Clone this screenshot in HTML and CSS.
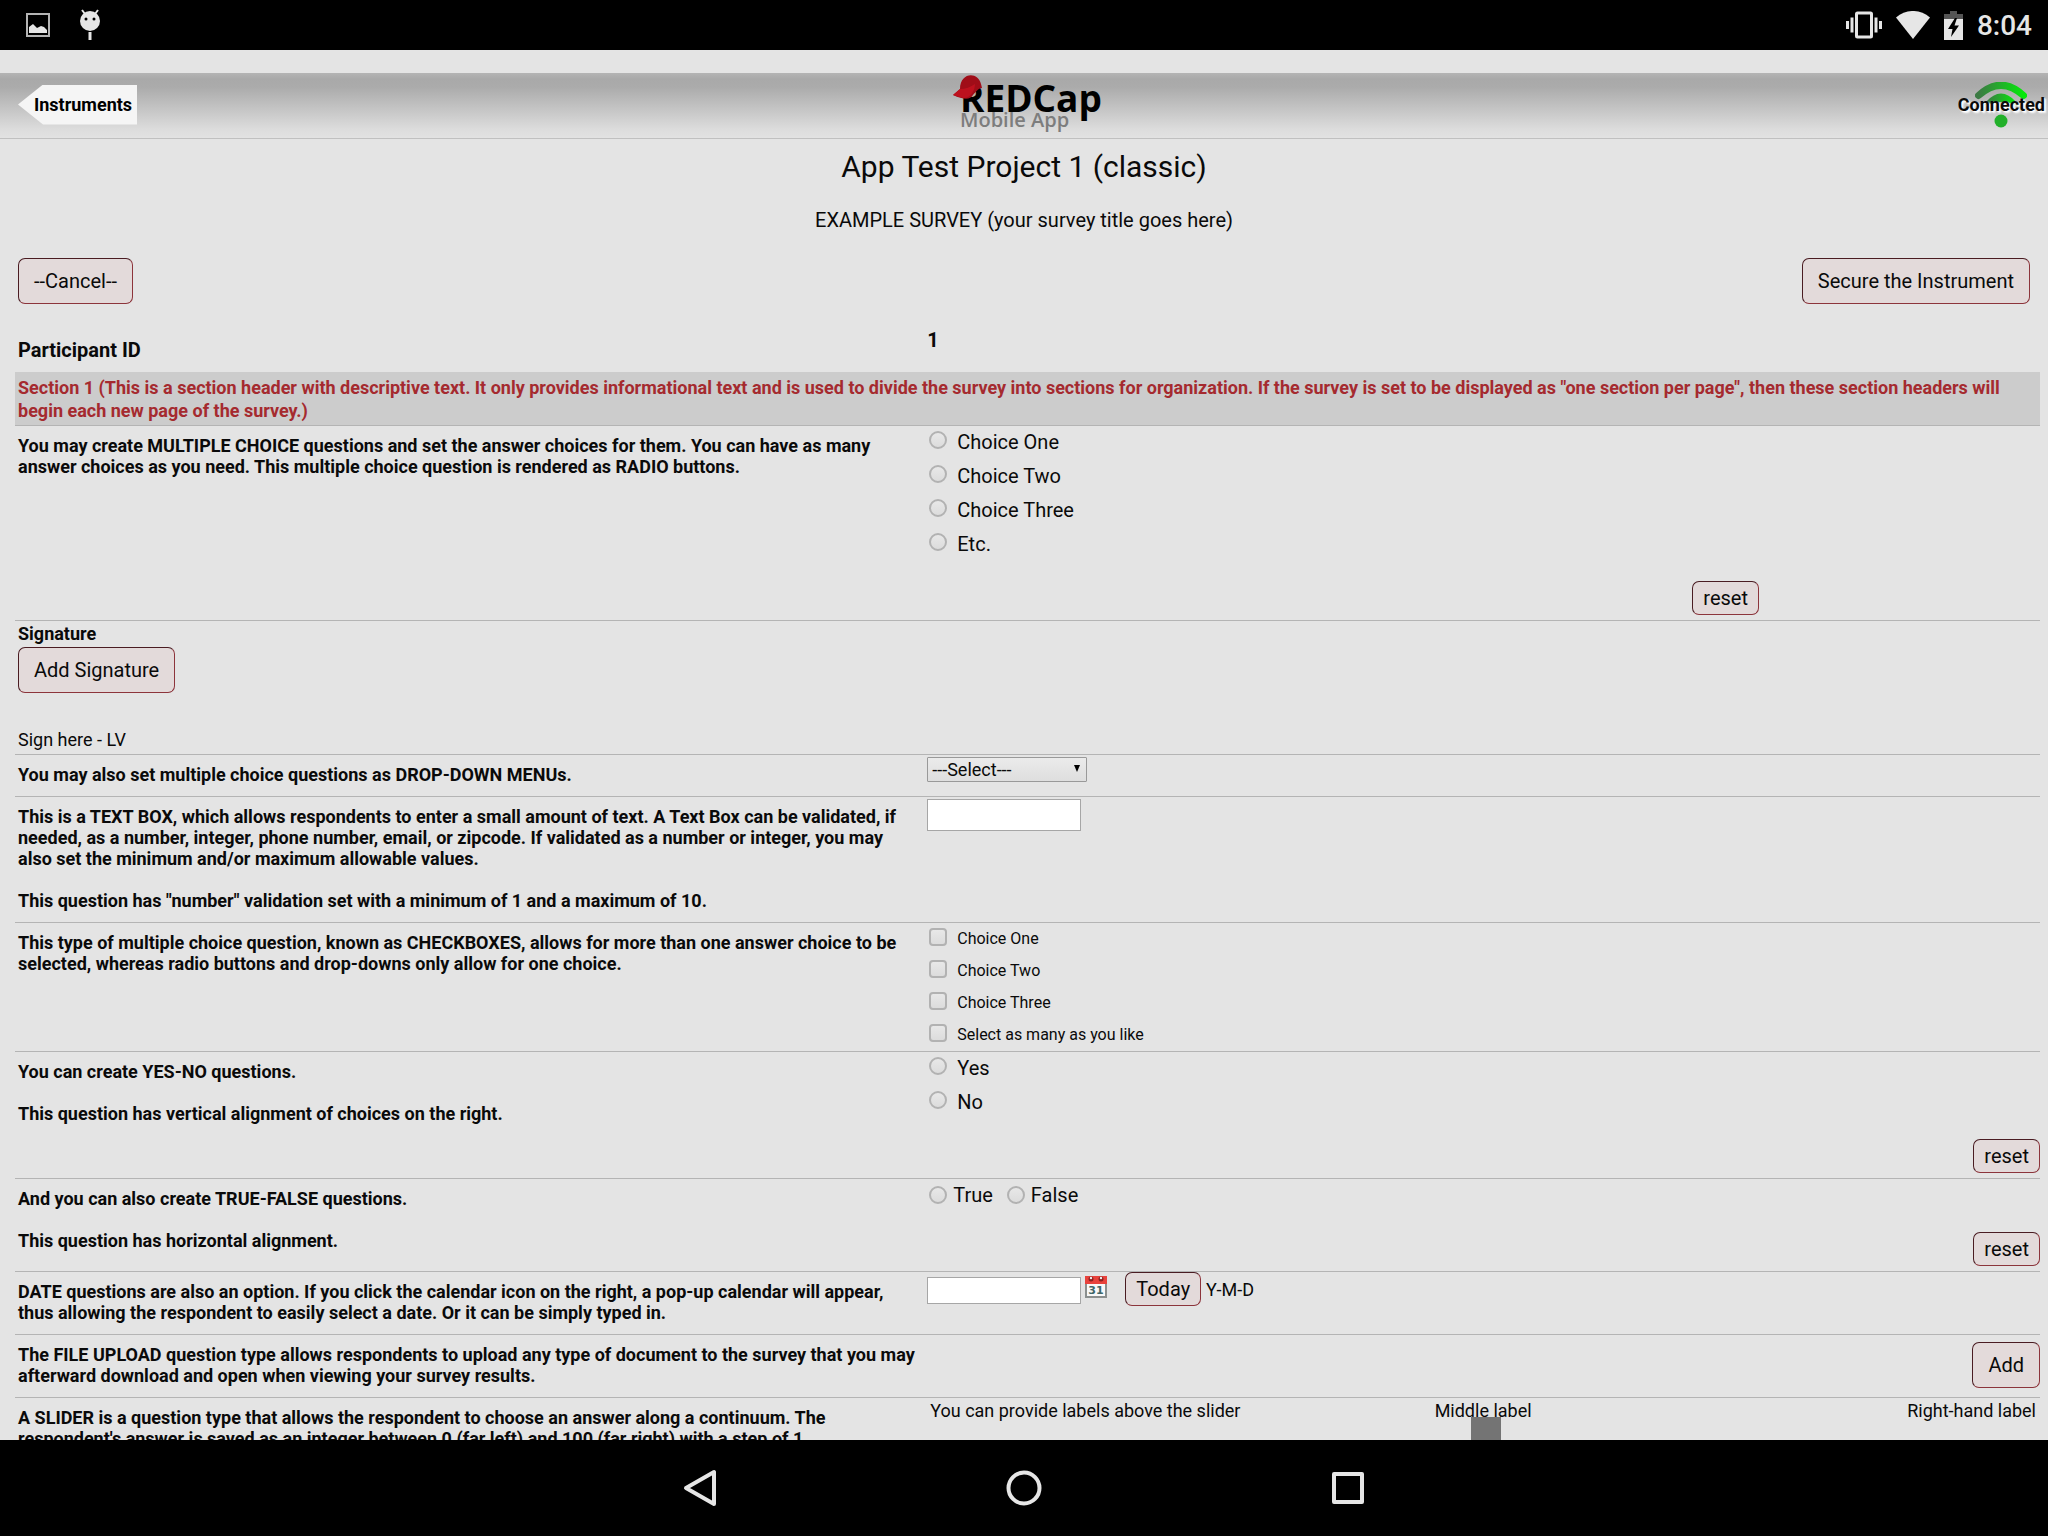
FILE: index.html
```html
<!DOCTYPE html>
<html lang="en">
<head>
<meta charset="utf-8">
<meta name="viewport" content="width=device-width, initial-scale=1">
<title>REDCap Mobile App</title>
<link rel="stylesheet" href="styles.css">
</head>
<body>
<div class="status-bar">
  <div class="status-group status-group-left">
    <svg width="24" height="24" viewBox="0 0 24 24" aria-hidden="true"><rect x="1" y="1" width="22" height="22" fill="none" stroke="#b4b4b4" stroke-width="2"/><path d="M3 20V14L7 11L11 15L15 13L18 14L21 17V20Z" fill="#e6e6e6"/></svg>
    <svg width="20" height="32" viewBox="0 0 20 32" aria-hidden="true"><path d="M2 1L5 5M18 1L15 5" stroke="#e6e6e6" stroke-width="2"/><circle cx="10" cy="12" r="10" fill="#e6e6e6"/><circle cx="6" cy="10" r="1.5"/><circle cx="14" cy="10" r="1.5"/><rect x="8.500" y="23" width="3" height="8" fill="#e6e6e6"/></svg>
  </div>
  <div class="status-group status-group-right">
    <svg width="36" height="28" viewBox="0 0 36 28" fill="#e6e6e6" aria-hidden="true"><rect x="10.500" y="2" width="15" height="24" rx="1" fill="none" stroke="#e6e6e6" stroke-width="3"/><path d="M0 10h3v8H0zM4.500 6.500h3v15h-3zM28.500 6.500h3v15h-3zM33 10h3v8h-3z"/></svg>
    <svg width="34" height="28" viewBox="0 0 34 28" aria-hidden="true"><path d="M0 6.500C10 -2.200 24 -2.200 34 6.500L17 28Z" fill="#e6e6e6"/></svg>
    <svg width="19" height="29" viewBox="0 0 19 29" aria-hidden="true"><path d="M0 3h6V0h7v3h6v6H0z" fill="#555"/><path d="M0 8h19v21H0z" fill="#e6e6e6"/><path d="M11 7L4 18h4.500L7 26L15 14.500h-4.500L13 7Z" fill="#000"/></svg>
    <span class="clock">8:04</span>
  </div>
</div>

<main class="screen">
  <header class="app-header">
    <a class="back-link" href="#">Instruments</a>
    <svg class="logo" width="152" height="60" viewBox="0 0 152 60" role="img" aria-label="REDCap Mobile App">
      <text class="logo-name" x="4" y="37">REDCap</text>
      <text class="logo-sub" x="4" y="52">Mobile App</text>
      <path d="M-3 20L4 14C4 -3 22 -4 25 9L26 13C22 13 20 17 17 20C14 25 8 25 -3 20Z" fill="#a00d18"/>
      <path d="M-3 20L4 14C9 14 15 12 19 9C19 16 14 24 7 23Z" fill="#bd111e"/>
    </svg>
    <div class="connection">
      <svg width="52" height="46" viewBox="0 0 52 46" aria-hidden="true">
        <defs><linearGradient id="signal" x1="0" x2="1"><stop offset="0" stop-color="#3c7a44"/><stop offset=".5" stop-color="#22b02a"/><stop offset="1" stop-color="#05e80a"/></linearGradient></defs>
        <path d="M3.500 13.500Q26 -7 48.500 13.500" fill="none" stroke="url(#signal)" stroke-width="7" stroke-linecap="round"/>
        <path d="M12 21Q26 5 40 21Q26 16 12 21Z" fill="url(#signal)" stroke="url(#signal)" stroke-width="3"/>
        <circle cx="26" cy="39" r="6.500" fill="#22b02a"/>
      </svg>
      <span class="connection-label">Connected</span>
    </div>
  </header>

  <h1 class="project-title">App Test Project 1 (classic)</h1>
  <p class="survey-title">EXAMPLE SURVEY (your survey title goes here)</p>

  <div class="actions">
    <button type="button" class="btn btn-large">--Cancel--</button>
    <button type="button" class="btn btn-large">Secure the Instrument</button>
  </div>

  <form class="instrument">
    <div class="participant">
      <span class="participant-label">Participant ID</span>
      <span class="participant-value">1</span>
    </div>

    <h2 class="section-header">Section 1 (This is a section header with descriptive text. It only provides informational text and is used to divide the survey into sections for organization. If the survey is set to be displayed as "one section per page", then these section headers will begin each new page of the survey.)</h2>

    <div class="question" role="radiogroup" aria-labelledby="q-multi">
      <div class="question-text" id="q-multi">You may create MULTIPLE CHOICE questions and set the answer choices for them. You can have as many answer choices as you need. This multiple choice question is rendered as RADIO buttons.</div>
      <div class="answer">
        <label class="choice"><input class="mark mark-radio" type="radio" name="multi">Choice One</label>
        <label class="choice"><input class="mark mark-radio" type="radio" name="multi">Choice Two</label>
        <label class="choice"><input class="mark mark-radio" type="radio" name="multi">Choice Three</label>
        <label class="choice"><input class="mark mark-radio" type="radio" name="multi">Etc.</label>
        <div class="reset-row reset-row-inset"><button type="button" class="btn">reset</button></div>
      </div>
    </div>

    <div class="signature">
      <div class="signature-label">Signature</div>
      <button type="button" class="btn btn-large">Add Signature</button>
      <div class="signature-note">Sign here - LV</div>
    </div>

    <div class="question">
      <label class="question-text" for="q-menu">You may also set multiple choice questions as DROP-DOWN MENUs.</label>
      <div class="answer answer-field">
        <span class="select-wrap">
          <select class="select" id="q-menu"><option>---Select---</option></select>
          <svg class="select-arrow" width="6" height="7" viewBox="0 0 6 7" aria-hidden="true"><path d="M0 0H6L3 7Z"/></svg>
        </span>
      </div>
    </div>

    <div class="question">
      <label class="question-text" for="q-number">This is a TEXT BOX, which allows respondents to enter a small amount of text. A Text Box can be validated, if needed, as a number, integer, phone number, email, or zipcode. If validated as a number or integer, you may also set the minimum and/or maximum allowable values.<br><br>This question has "number" validation set with a minimum of 1 and a maximum of 10.</label>
      <div class="answer answer-field"><input class="field field-tall" id="q-number" type="text"></div>
    </div>

    <div class="question" role="group" aria-labelledby="q-check">
      <div class="question-text" id="q-check">This type of multiple choice question, known as CHECKBOXES, allows for more than one answer choice to be selected, whereas radio buttons and drop-downs only allow for one choice.</div>
      <div class="answer">
        <label class="choice choice-small"><input class="mark mark-check" type="checkbox">Choice One</label>
        <label class="choice choice-small"><input class="mark mark-check" type="checkbox">Choice Two</label>
        <label class="choice choice-small"><input class="mark mark-check" type="checkbox">Choice Three</label>
        <label class="choice choice-small"><input class="mark mark-check" type="checkbox">Select as many as you like</label>
      </div>
    </div>

    <div class="question" role="radiogroup" aria-labelledby="q-yesno">
      <div class="question-text" id="q-yesno">You can create YES-NO questions.<br><br>This question has vertical alignment of choices on the right.</div>
      <div class="answer">
        <label class="choice"><input class="mark mark-radio" type="radio" name="yesno">Yes</label>
        <label class="choice"><input class="mark mark-radio" type="radio" name="yesno">No</label>
        <div class="reset-row"><button type="button" class="btn">reset</button></div>
      </div>
    </div>

    <div class="question" role="radiogroup" aria-labelledby="q-truefalse">
      <div class="question-text" id="q-truefalse">And you can also create TRUE-FALSE questions.<br><br>This question has horizontal alignment.</div>
      <div class="answer">
        <div class="choices-inline">
          <label class="choice choice-inline"><input class="mark mark-radio" type="radio" name="truefalse">True</label>
          <label class="choice choice-inline"><input class="mark mark-radio" type="radio" name="truefalse">False</label>
        </div>
        <div class="reset-row"><button type="button" class="btn">reset</button></div>
      </div>
    </div>

    <div class="question">
      <label class="question-text" for="q-date">DATE questions are also an option. If you click the calendar icon on the right, a pop-up calendar will appear, thus allowing the respondent to easily select a date. Or it can be simply typed in.</label>
      <div class="answer answer-date">
        <input class="field field-date" id="q-date" type="text">
        <svg class="calendar" width="22" height="24" viewBox="0 0 22 24" aria-hidden="true"><path d="M0 1h22v22H0z" fill="#8b8f8e"/><path d="M2 8h18v13H2z" fill="#f8f8f8"/><path d="M0 1h22v8H0z" fill="#e8423c"/><circle cx="6" cy="4" r="2.500" fill="#8f2020"/><circle cx="16" cy="4" r="2.500" fill="#8f2020"/><circle cx="6" cy="3" r="1.200" fill="#eee"/><circle cx="16" cy="3" r="1.200" fill="#eee"/><text class="calendar-day" x="11" y="19" text-anchor="middle">31</text></svg>
        <button type="button" class="btn">Today</button>
        <span class="date-format">Y-M-D</span>
      </div>
    </div>

    <div class="question">
      <div class="question-text">The FILE UPLOAD question type allows respondents to upload any type of document to the survey that you may afterward download and open when viewing your survey results.</div>
      <div class="answer answer-upload"><button type="button" class="btn btn-large">Add</button></div>
    </div>

    <div class="question">
      <label class="question-text" for="q-slider">A SLIDER is a question type that allows the respondent to choose an answer along a continuum. The respondent's answer is saved as an integer between 0 (far left) and 100 (far right) with a step of 1.</label>
      <div class="answer">
        <div class="slider-labels">
          <span>You can provide labels above the slider</span>
          <span class="slider-middle">Middle label</span>
          <span class="slider-right">Right-hand label</span>
        </div>
        <input class="slider" id="q-slider" type="range" min="0" max="100" step="1" value="50">
      </div>
    </div>
  </form>
</main>

<nav class="nav-bar">
  <button type="button" class="nav-button" aria-label="Back"><svg width="40" height="40" viewBox="0 0 40 40"><path d="M34 4V36L6 20Z"/></svg></button>
  <button type="button" class="nav-button" aria-label="Home"><svg width="40" height="40" viewBox="0 0 40 40"><circle cx="20" cy="20" r="15.500"/></svg></button>
  <button type="button" class="nav-button" aria-label="Recent apps"><svg width="40" height="40" viewBox="0 0 40 40"><rect x="6" y="6" width="28" height="28"/></svg></button>
</nav>
</body>
</html>
```
FILE: styles.css
```css
* {
  box-sizing: border-box;
}

body {
  display: flex;
  flex-direction: column;
  height: 100vh;
  margin: 0;
  background: #e4e4e4;
  color: #0a0a0a;
  font: 18px/21px Roboto, "Liberation Sans", sans-serif;
}

button,
input,
select {
  margin: 0;
  font-family: inherit;
}

svg {
  display: block;
  flex: none;
}

/* Android status bar */
.status-bar {
  display: flex;
  flex: none;
  justify-content: space-between;
  height: 50px;
  padding: 0 16px 0 26px;
  background: #000;
  color: #e6e6e6;
}

.status-group {
  display: flex;
  align-items: center;
}

.status-group-left {
  gap: 30px;
}

.status-group-right {
  gap: 14px;
}

.clock {
  padding-top: 2px;
  font-size: 28px;
  font-weight: 500;
  line-height: 32px;
}

.screen {
  flex: 1;
  min-height: 0;
  padding-top: 23px;
  overflow-y: auto;
  scrollbar-width: none;
}

/* App header */
.app-header {
  display: grid;
  grid-template-columns: 1fr auto 1fr;
  align-items: center;
  height: 66px;
  padding: 0 3px 2px 18px;
  border-bottom: 1px solid #c0c0c0;
  background: linear-gradient(#b4b4b4, #a9a9a9 6px, #ababab 14px, #dcdcdc 56px, #e2e2e2);
}

.back-link {
  justify-self: start;
  height: 40px;
  padding: 0 5px 0 16px;
  background: #f5f5f5;
  clip-path: polygon(0 50%, 25px 0, 100% 0, 100% 100%, 25px 100%);
  color: #000;
  font-weight: 700;
  line-height: 40px;
  text-decoration: none;
}

.logo {
  overflow: visible;
}

.logo-name {
  font: 700 37px "Open Sans", sans-serif;
}

.logo-sub {
  fill: #7d7d7d;
  font: 600 20px "Open Sans", sans-serif;
}

.connection {
  display: grid;
  justify-self: end;
  place-items: center;
}

.connection > * {
  grid-area: 1 / 1;
}

.connection-label {
  font-weight: 700;
  text-shadow: 1px 1px 1px #fff, 2px 2px 2px #fff;
}

.project-title {
  margin: 10px 0 0;
  font-size: 30px;
  font-weight: 400;
  line-height: 36px;
  text-align: center;
}

.survey-title {
  margin: 23px 0 0;
  font-size: 20px;
  line-height: 24px;
  text-align: center;
}

.actions {
  display: flex;
  justify-content: space-between;
  padding: 26px 18px 24px;
}

.btn {
  height: 34px;
  padding: 0 10px;
  border: 1px solid;
  border-color: #4a1c22 #8c343b #8c343b #4a1c22;
  border-radius: 7px;
  background: #e3dada;
  color: #0a0a0a;
  font-size: 20px;
  line-height: 24px;
}

.btn-large {
  height: 46px;
  padding: 0 15px;
}

/* Instrument form */
.instrument {
  padding: 0 8px 0 15px;
}

.participant,
.question {
  display: grid;
  grid-template-columns: calc(45% + 1px) 1fr;
}

.participant {
  height: 44px;
  font-size: 20px;
  font-weight: 700;
  line-height: 24px;
}

.participant-label {
  padding: 10px 3px 0;
}

.section-header {
  margin: 0;
  padding: 4px 3px 3px;
  border-bottom: 1px solid #b4b4b4;
  background: #cccccc;
  color: #a52a2f;
  font-size: 18px;
  font-weight: 700;
  line-height: 23px;
}

.question {
  border-bottom: 1px solid #b4b4b4;
}

.question-text {
  padding: 9px 9px 11px 3px;
  font-weight: 700;
}

.choice {
  display: flex;
  align-items: center;
  gap: 10px;
  height: 34px;
  padding: 0 0 2px 2px;
  font-size: 20px;
  line-height: 24px;
}

.choice-small {
  height: 32px;
  padding-bottom: 0;
  font-size: 16px;
}

.choices-inline {
  display: flex;
  gap: 12px;
}

.choice-inline {
  gap: 6px;
}

.mark {
  width: 18px;
  height: 18px;
  margin-bottom: 4px;
  border: 2px solid #b2b2b2;
  appearance: none;
  background: linear-gradient(#e8e8e8, #dcdcdc);
}

.choice-inline .mark {
  margin-bottom: 0;
}

.mark-radio {
  border-radius: 50%;
}

.mark-check {
  border-radius: 4px;
}

.reset-row {
  display: flex;
  justify-content: flex-end;
  padding: 19px 0 5px;
}

.reset-row-inset {
  padding-right: 281px;
}

.signature {
  display: flex;
  flex-direction: column;
  align-items: flex-start;
  padding: 2px 3px 4px;
  border-bottom: 1px solid #b4b4b4;
}

.signature-label {
  margin-bottom: 3px;
  font-weight: 700;
}

.signature-note {
  margin-top: 36px;
}

.answer-field {
  padding-top: 2px;
}

.select-wrap {
  display: block;
  position: relative;
  width: 160px;
}

.select {
  display: block;
  width: 100%;
  height: 25px;
  padding: 0 4px 1px;
  border: 1px solid #999;
  border-radius: 1px;
  appearance: none;
  background: linear-gradient(#ebebeb, #dedede);
  color: #0a0a0a;
  font-size: 18px;
  line-height: 21px;
}

.select-arrow {
  position: absolute;
  top: 8px;
  right: 7px;
  pointer-events: none;
}

.field {
  display: block;
  width: 154px;
  height: 27px;
  padding: 0 4px;
  border: 1px solid #a6a6a6;
  background: #fff;
  font-size: 18px;
}

.field-tall {
  height: 32px;
}

.field-date {
  margin-top: 3px;
}

.answer-date {
  display: flex;
  align-items: center;
  height: 34px;
}

.calendar {
  margin: 0 18px 4px 4px;
}

.calendar-day {
  fill: #3f6668;
  font: 700 11px "DejaVu Sans", sans-serif;
}

.date-format {
  margin-left: 5px;
}

.answer-upload {
  display: flex;
  align-items: center;
  justify-content: flex-end;
  padding-bottom: 2px;
}

.slider-labels {
  display: grid;
  grid-template-columns: 1fr auto 1fr;
  padding: 3px 4px 0 3px;
  line-height: 20px;
}

.slider-right {
  text-align: right;
}

.slider {
  display: block;
  width: 100%;
  height: 44px;
  margin-top: -4px;
  padding: 0 0 0 4px;
  appearance: none;
  background: none;
}

.slider::-webkit-slider-thumb {
  width: 30px;
  height: 44px;
  appearance: none;
  background: #747474;
}

/* Android navigation bar */
.nav-bar {
  display: flex;
  flex: none;
  justify-content: center;
  gap: 228px;
  height: 96px;
  background: #000;
}

.nav-button {
  display: grid;
  place-items: center;
  width: 96px;
  padding: 0;
  border: 0;
  background: none;
}

.nav-button svg {
  fill: none;
  stroke: #e6e6e6;
  stroke-width: 4;
  stroke-linejoin: round;
}
```
